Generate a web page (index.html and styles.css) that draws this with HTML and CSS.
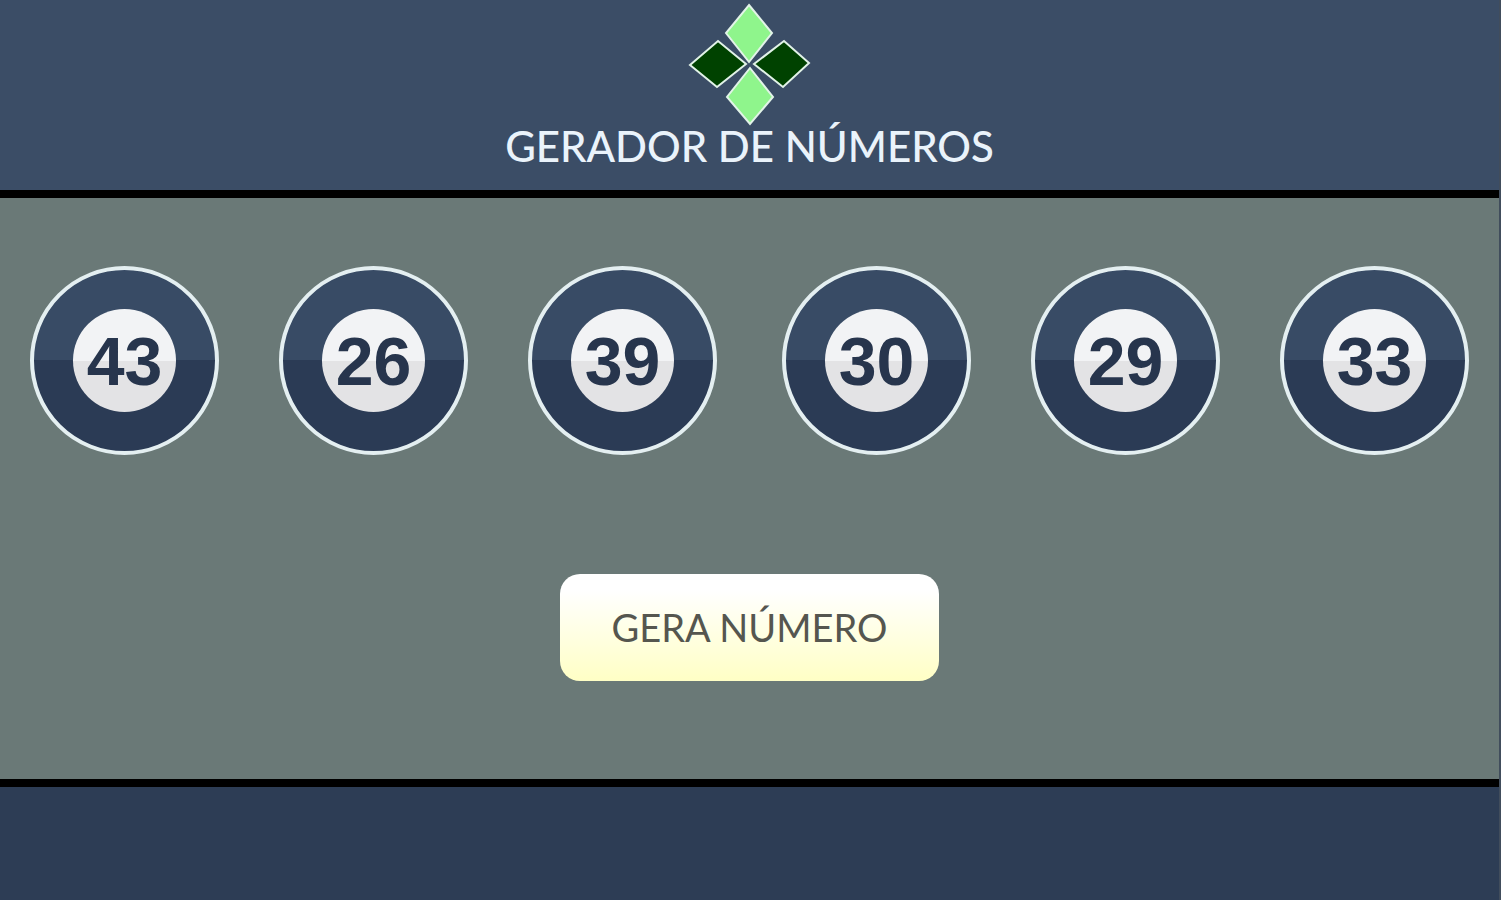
FILE: index.html
```html
<!DOCTYPE html>
<html lang="pt-BR">
<head>
<meta charset="utf-8">
<meta name="viewport" content="width=device-width, initial-scale=1">
<title>Gerador de Números</title>
<link rel="stylesheet" href="styles.css">
</head>
<body>
<header class="header">
  <svg class="logo" width="124" height="124" viewBox="0 0 124 124" aria-hidden="true">
    <g class="logo-light">
      <path d="M61 3L84 31L61 60L38 31Z"/>
      <path d="M62 66L85 95L62 122L39 95Z"/>
    </g>
    <g class="logo-dark">
      <path d="M2 63L30 39L58 62L29 85Z"/>
      <path d="M66 62L96 39L121 61L95 85Z"/>
    </g>
  </svg>
  <h1 class="title">GERADOR DE NÚMEROS</h1>
</header>
<main class="main">
  <div class="balls">
    <div class="group">
      <div class="ball"><span class="number">43</span></div>
      <div class="ball"><span class="number">26</span></div>
      <div class="ball"><span class="number">39</span></div>
    </div>
    <div class="group">
      <div class="ball"><span class="number">30</span></div>
      <div class="ball"><span class="number">29</span></div>
      <div class="ball"><span class="number">33</span></div>
    </div>
  </div>
  <button class="generate" type="button">GERA NÚMERO</button>
</main>
<footer class="footer"></footer>
</body>
</html>
```
FILE: styles.css
```css
* {
  box-sizing: border-box;
}

body {
  display: flex;
  flex-direction: column;
  min-height: 100vh;
  margin: 0;
  border-right: 2px solid #414d5c;
  font-family: Lato, "Liberation Sans", sans-serif;
}

.header {
  display: flex;
  flex-direction: column;
  align-items: center;
  padding: 2px 0 23px;
  border-bottom: 8px solid #000;
  background: #3b4d66;
}

.logo {
  stroke: #e2f3e8;
  stroke-width: 2;
}

.logo-light {
  fill: #8ff58c;
}

.logo-dark {
  fill: #004200;
}

.title {
  margin: 0;
  color: #eaf3fb;
  font-size: 42px;
  font-weight: 500;
  line-height: 41px;
}

.main {
  display: flex;
  flex-direction: column;
  align-items: center;
  gap: 119px;
  padding: 68px 30px 98px;
  border-bottom: 8px solid #000;
  background: #6a7977;
}

.balls {
  display: flex;
  flex-wrap: wrap;
  justify-content: space-between;
  width: 100%;
  row-gap: 60px;
}

.group {
  display: flex;
  flex-wrap: wrap;
  gap: 60px;
}

.ball {
  display: flex;
  align-items: center;
  justify-content: center;
  width: 189px;
  height: 189px;
  border: 4px solid #e4eff1;
  border-radius: 50%;
  background: linear-gradient(#384b65 50%, #2b3b55 50%);
}

.number {
  display: flex;
  align-items: center;
  justify-content: center;
  width: 103px;
  height: 103px;
  border-radius: 50%;
  background: linear-gradient(#f2f3f5 50%, #e3e3e5 50%);
  color: #27354d;
  font-family: "Liberation Sans", Arial, sans-serif;
  font-size: 68px;
  font-weight: 700;
}

.generate {
  padding: 30px 52px;
  border: 0;
  border-radius: 20px;
  background: linear-gradient(#fff 15%, #ffffc5);
  color: #55564f;
  font-family: inherit;
  font-size: 38px;
  line-height: 47px;
  cursor: pointer;
}

.footer {
  flex: 1;
  background: #2d3d55;
}
```
